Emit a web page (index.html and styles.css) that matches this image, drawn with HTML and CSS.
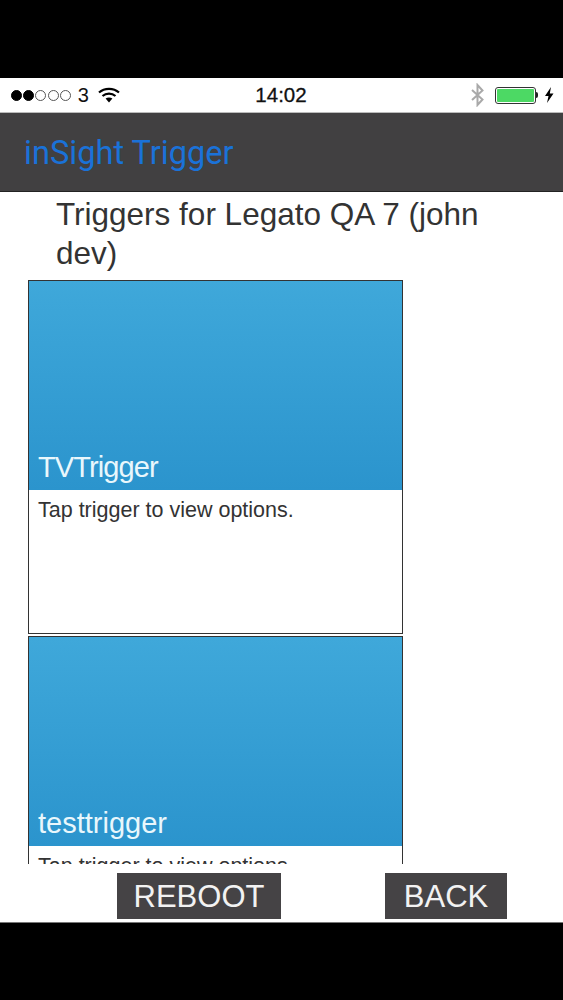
FILE: index.html
```html
<!DOCTYPE html>
<html lang="en">
<head>
<meta charset="utf-8">
<title>inSight Trigger</title>
<link rel="stylesheet" href="styles.css">
</head>
<body>
<div class="band-top"></div>
<div class="status">
  <div class="status-left">
    <span class="signal">
      <i class="dot on"></i><i class="dot on"></i><i class="dot"></i><i class="dot"></i><i class="dot"></i>
    </span>
    <span class="carrier">3</span>
    <svg class="wifi" width="22" height="16" viewBox="0 0 22 16"><path d="M1 5.5C6.5 .6 15.5 .6 21 5.5" fill="none" stroke="#000" stroke-width="2.2"/><path d="M4.5 9C8.2 5.7 13.8 5.7 17.5 9" fill="none" stroke="#000" stroke-width="2.2"/><path d="M7.6 11.6L11 15.6L14.4 11.6C12.4 10 9.6 10 7.6 11.6Z" fill="#000"/></svg>
  </div>
  <div class="clock">14:02</div>
  <div class="status-right">
    <svg class="bt" width="15" height="24" viewBox="0 0 15 24"><path d="M2 7L12.5 16.5L7.5 22V2L12.5 7.5L2 17" fill="none" stroke="#a9a9a9" stroke-width="2"/></svg>
    <span class="battery"><span class="battery-fill"></span></span>
    <span class="battery-tip"></span>
    <svg class="bolt" width="10" height="16" viewBox="0 0 10 16"><path d="M7 0L1 9H4.5L3 16L9.5 6.5H5.8Z" fill="#000"/></svg>
  </div>
</div>
<header class="appbar"><span class="appbar-title">inSight Trigger</span></header>
<main class="content">
  <h1 class="heading">Triggers for Legato QA 7 (john dev)</h1>
  <div class="list">
    <section class="card">
      <div class="card-head"><span class="card-title card-title-tight">TVTrigger</span></div>
      <p class="card-text">Tap trigger to view options.</p>
    </section>
    <section class="card">
      <div class="card-head"><span class="card-title">testtrigger</span></div>
      <p class="card-text">Tap trigger to view options.</p>
    </section>
  </div>
  <div class="actions">
    <button class="btn btn-reboot">REBOOT</button>
    <button class="btn btn-back">BACK</button>
  </div>
</main>
<div class="band-bottom"></div>
</body>
</html>
```
FILE: styles.css
```css
* { box-sizing: border-box; }
html, body { margin: 0; padding: 0; }
body {
  width: 563px;
  height: 1000px;
  overflow: hidden;
  display: flex;
  flex-direction: column;
  background: #fff;
  font-family: "Liberation Sans", Arial, sans-serif;
}
.band-top { height: 78px; background: #000; flex: none; }
.band-bottom { flex: 1; background: #000; border-top: 1px solid #777; }

.status {
  height: 34px;
  flex: none;
  background: #fff;
  display: flex;
  align-items: center;
  justify-content: space-between;
  padding: 0 9px 0 11px;
  position: relative;
}
.status-left { display: flex; align-items: center; width: 170px; }
.signal { display: flex; gap: 1.2px; }
.dot { width: 11px; height: 11px; border-radius: 50%; border: 1px solid #555; display: block; }
.dot.on { background: #000; border-color: #000; }
.carrier { font-size: 20px; margin-left: 7px; color: #111; }
.wifi { margin-left: 9px; margin-top: 0; }
.clock { font-size: 20.5px; color: #111; -webkit-text-stroke: .3px #111; margin-left: -3px; }
.status-right { display: flex; align-items: center; width: 170px; justify-content: flex-end; }
.bt { margin-right: 10px; }
.battery { width: 41px; height: 17px; border: 1px solid #333; border-radius: 3px; padding: 1px; display: block; }
.battery-fill { display: block; width: 100%; height: 100%; background: #4cd964; border-radius: 1px; }
.battery-tip { width: 2px; height: 6px; background: #222; border-radius: 0 2px 2px 0; margin-right: 6px; }
.bolt { display: block; }

.appbar {
  height: 80px;
  flex: none;
  background: #414041;
  border-top: 1px solid #bbb;
  border-bottom: 1px solid #222;
  display: flex;
  align-items: center;
  padding: 2px 0 0 24px;
}
.appbar-title { font-family: Roboto, sans-serif; font-size: 32.6px; color: #1a72d8; }

.content { height: 730px; flex: none; display: flex; flex-direction: column; }
.heading {
  margin: 0;
  height: 88px;
  padding: 3px 50px 0 56px;
  font-size: 31.5px;
  line-height: 39px;
  font-weight: 400;
  color: #333;
}
.list {
  height: 584px;
  flex: none;
  overflow: hidden;
  margin-left: 28px;
  width: 375px;
  display: flex;
  flex-direction: column;
  gap: 2px;
}
.card { height: 354px; flex: none; border: 1px solid #333; background: #fff; }
.card-head {
  height: 209px;
  background: linear-gradient(#3fa8da, #2b94cd);
  display: flex;
  align-items: flex-end;
  padding: 0 0 5px 9px;
}
.card-title { font-size: 29px; line-height: 36px; color: #e9f7fc; }
.card-title-tight { letter-spacing: -.9px; }
.card-text { margin: 7px 0 0 9px; font-size: 21.5px; line-height: 27px; color: #333; }

.actions { display: flex; padding: 9px 0 0 117px; }
.btn {
  height: 46px;
  border: 0;
  padding: 1px 0 0;
  background: #454345;
  color: #f2f2f2;
  font-family: "Liberation Sans", Arial, sans-serif;
  font-size: 31px;
}
.btn-reboot { width: 164px; }
.btn-back { width: 122px; margin-left: 104px; }
```
